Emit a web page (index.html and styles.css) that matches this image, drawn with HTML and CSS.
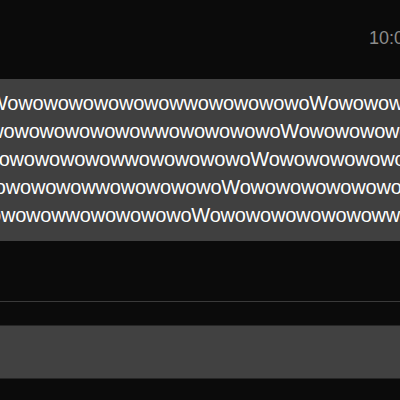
FILE: index.html
```html
<!DOCTYPE html>
<html lang="en">
<head>
    <meta charset="UTF-8">
    <meta name="viewport" content="width=device-width, initial-scale=1.0">
    <title>Messages</title>
    <link rel="stylesheet" href="styles.css">
</head>
<body>
    <div class="screen">
        <div class="time-row">
            <span class="time">10:0</span>
        </div>
        <div class="bubble">
            <div class="line l1">WowowowowowowowwowowowowoWowowowowowowowwowowowowoWowowowowowowowwowowowowo</div>
            <div class="line l2">WowowowowowowowwowowowowoWowowowowowowowwowowowowoWowowowowowowowwowowowowo</div>
            <div class="line l3">WowowowowowowowwowowowowoWowowowowowowowwowowowowoWowowowowowowowwowowowowo</div>
            <div class="line l4">WowowowowowowowwowowowowoWowowowowowowowwowowowowoWowowowowowowowwowowowowo</div>
            <div class="line l5">WowowowowowowowwowowowowoWowowowowowowowwowowowowoWowowowowowowowwowowowowo</div>
        </div>
        <div class="spacer"></div>
        <div class="divider"></div>
        <div class="input-bar"></div>
    </div>
</body>
</html>
```

FILE: styles.css
```css
* {
    margin: 0;
    padding: 0;
    box-sizing: border-box;
}

body {
    background: #0b0b0b;
    font-family: 'Liberation Sans', Arial, sans-serif;
    overflow: hidden;
}

.screen {
    width: 400px;
    height: 400px;
    display: flex;
    flex-direction: column;
}

.time-row {
    height: 79px;
    padding-top: 28px;
    display: flex;
    justify-content: flex-end;
    overflow: hidden;
}

.time {
    color: #8c8c8c;
    font-size: 18px;
    line-height: 20px;
    white-space: nowrap;
    margin-right: -4px;
}

.bubble {
    background: #404040;
    height: 162px;
    padding: 10px 0 12px;
    overflow: hidden;
}

.line {
    color: #ffffff;
    font-size: 20px;
    line-height: 28px;
    letter-spacing: -0.2px;
    white-space: nowrap;
}

.l1 { text-indent: -11px; }
.l2 { text-indent: -40px; }
.l3 { text-indent: -70px; }
.l4 { text-indent: -99px; }
.l5 { text-indent: -129px; }

.spacer {
    height: 60px;
}

.divider {
    height: 1px;
    background: #3a3a3a;
}

.input-bar {
    margin-top: 23px;
    height: 54px;
    background: #414141;
    border-top: 1px solid #262626;
    border-bottom: 1px solid #262626;
}
```
